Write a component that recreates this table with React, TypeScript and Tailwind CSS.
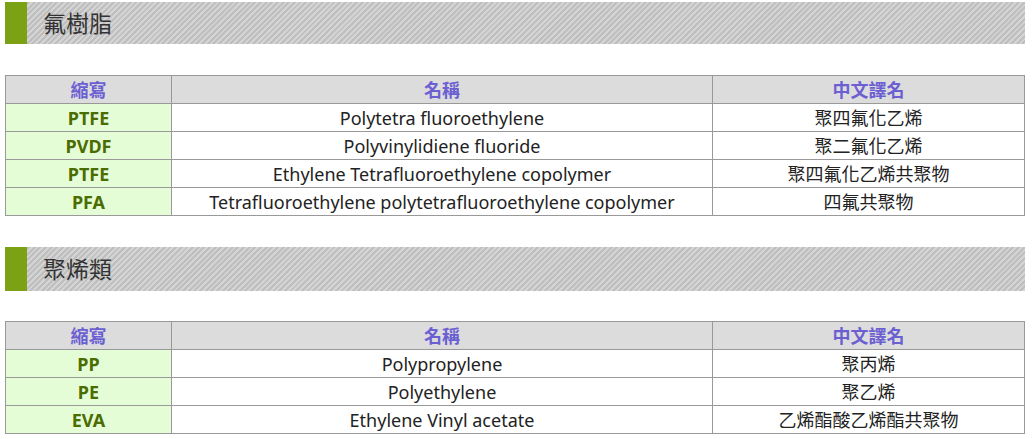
const sections = [
    {
        title: "氟樹脂",
        rows: [
            ["PTFE", "Polytetra fluoroethylene", "聚四氟化乙烯"],
            ["PVDF", "Polyvinylidiene fluoride", "聚二氟化乙烯"],
            ["PTFE", "Ethylene Tetrafluoroethylene copolymer", "聚四氟化乙烯共聚物"],
            ["PFA", "Tetrafluoroethylene polytetrafluoroethylene copolymer", "四氟共聚物"],
        ],
    },
    {
        title: "聚烯類",
        rows: [
            ["PP", "Polypropylene", "聚丙烯"],
            ["PE", "Polyethylene", "聚乙烯"],
            ["EVA", "Ethylene Vinyl acetate", "乙烯酯酸乙烯酯共聚物"],
        ],
    },
];

const Heading = ({ title, tall }: { title: string; tall?: boolean }) => (
    <div
        className={`flex items-center ${tall ? "h-[44px]" : "h-[42px]"} bg-[repeating-linear-gradient(135deg,#bfbfbf_0px,#bfbfbf_2px,#d4d4d4_2px,#d4d4d4_4px)]`}
    >
        <div className="h-full w-[22px] bg-[#7aa214]" />
        <h2 className="ml-[16px] text-[23px] leading-none text-[#333]">{title}</h2>
    </div>
);

const App = () => {
    return (
        <div className="w-[1032px] bg-white pl-[5px] pr-[7px] pt-[2px] font-['Noto_Sans','Noto_Sans_CJK_TC',sans-serif]">
            {sections.map((s, i) => (
                <div key={i} className={i === 0 ? "" : "mt-[31px]"}>
                    <Heading title={s.title} tall={i === 1} />
                    <table
                        className={`${i === 0 ? "mt-[31px]" : "mt-[30px]"} w-[1020px] table-fixed border-collapse text-[18px] text-[#222]`}
                    >
                        <colgroup>
                            <col className="w-[166px]" />
                            <col className="w-[541px]" />
                            <col />
                        </colgroup>
                        <thead>
                            <tr className="h-[28px] bg-[#dcdcdc] text-[#6b5fd2]">
                                <th className="border border-[#999] p-0 font-bold leading-none">縮寫</th>
                                <th className="border border-[#999] p-0 font-bold leading-none">名稱</th>
                                <th className="border border-[#999] p-0 font-bold leading-none">中文譯名</th>
                            </tr>
                        </thead>
                        <tbody>
                            {s.rows.map((r, j) => (
                                <tr key={j} className="h-[28px]">
                                    <td className="border border-[#999] bg-[#e4fdd6] p-0 text-center font-bold leading-none text-[#4b6c00]">
                                        {r[0]}
                                    </td>
                                    <td className="border border-[#999] p-0 text-center leading-none">{r[1]}</td>
                                    <td className="border border-[#999] p-0 text-center leading-none">{r[2]}</td>
                                </tr>
                            ))}
                        </tbody>
                    </table>
                </div>
            ))}
        </div>
    );
};

export default App;
